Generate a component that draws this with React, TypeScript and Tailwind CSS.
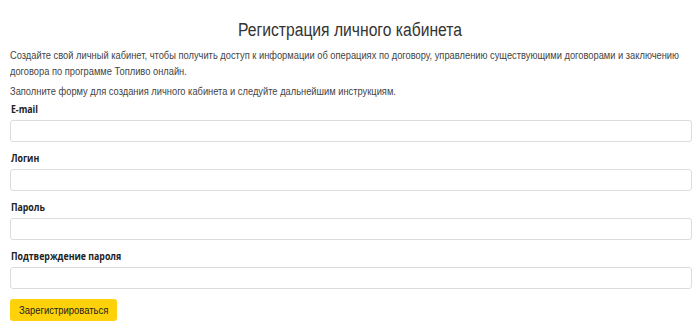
import React from "react";

const fields = ["E-mail", "Логин", "Пароль", "Подтверждение пароля"];

export default function App() {
  return (
    <div className="w-[700px] h-[331px] overflow-hidden bg-white px-[10px] pt-[18px] text-[#444]" style={{ fontFamily: '"Liberation Sans", Arial, sans-serif' }}>
      <h1 className="text-center text-[18px] leading-[24px] text-[#333] m-0 scale-x-[0.87]">Регистрация личного кабинета</h1>
      <p className="mt-[5px] w-[842px] origin-left scale-x-[0.81] text-[11.5px] leading-[16px]">
        Создайте свой личный кабинет, чтобы получить доступ к информации об операциях по договору, управлению существующими договорами и заключению договора по программе Топливо онлайн.
      </p>
      <p className="mt-[4px] w-[842px] origin-left scale-x-[0.81] text-[11.5px] leading-[16px]">
        Заполните форму для создания личного кабинета и следуйте дальнейшим инструкциям.
      </p>
      <div className="mt-[3px] flex flex-col">
        {fields.map((f, i) => (
          <div key={f} className={i === 0 ? "" : "mt-[9px]"}>
            <div className="w-[300px] origin-left scale-x-[0.88] text-[10px] leading-[14px] font-bold text-[#222] pl-[1px]" style={{ fontFamily: '"Open Sans", sans-serif' }}>{f}</div>
            <div className="mt-[4px] h-[22px] w-[682px] rounded-[3px] border border-[#dcdcdc] bg-white"></div>
          </div>
        ))}
      </div>
      <button className="mt-[10px] h-[22px] w-[107px] rounded-[3px] bg-[#fdd20a] text-[#222] flex items-center justify-center">
        <span className="text-[10.5px] leading-[14px] scale-x-[0.9] whitespace-nowrap">Зарегистрироваться</span>
      </button>
    </div>
  );
}
